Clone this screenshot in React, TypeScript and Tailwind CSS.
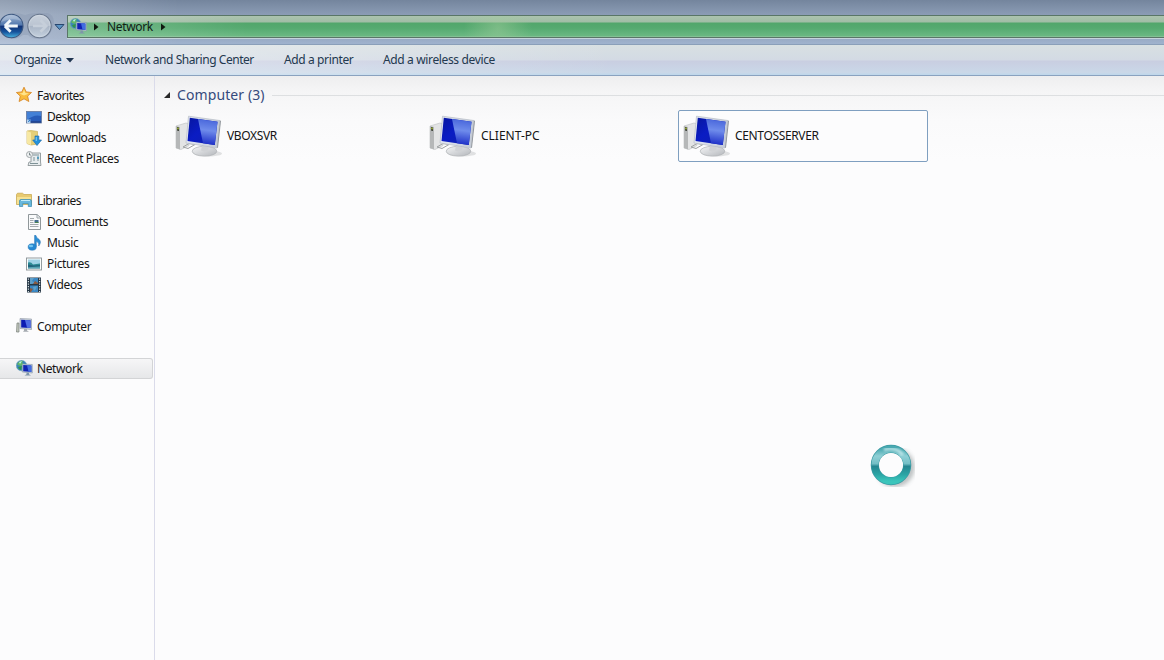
import React from "react";

type IconProps = { className?: string };

function Monitor({ className }: IconProps) {
  return (
    <svg className={className} viewBox="0 0 48 42" fill="none">
      <defs>
        <linearGradient id="screen" x1="0" y1="0" x2="1" y2="1">
          <stop offset="0" stopColor="#0716a0" />
          <stop offset="0.45" stopColor="#0a1cc4" />
          <stop offset="1" stopColor="#1021a8" />
        </linearGradient>
        <linearGradient id="shine" x1="0.2" y1="0" x2="0.1" y2="1">
          <stop offset="0" stopColor="#4a68dc" />
          <stop offset="0.4" stopColor="#6f8ceb" />
          <stop offset="1" stopColor="#1526c4" />
        </linearGradient>
        <linearGradient id="metal" x1="0" y1="0" x2="1" y2="1">
          <stop offset="0" stopColor="#f4f5f6" />
          <stop offset="1" stopColor="#b4b7bc" />
        </linearGradient>
        <linearGradient id="frame" x1="0" y1="0" x2="1" y2="0">
          <stop offset="0" stopColor="#e4e8f2" />
          <stop offset="1" stopColor="#c3cad6" />
        </linearGradient>
      </defs>
      <ellipse cx="33" cy="38" rx="14" ry="3" fill="#c4c5c7" opacity="0.5" />
      <path d="M1 10.500L11 7.500L14 8.500V30L6 34L1 32.500Z" fill="#e3e4e5" stroke="#c3c5c7" strokeWidth="0.700" />
      <path d="M1 10.500L5 11.500V34L1 32.500Z" fill="#b5b7b8" />
      <path d="M2 11.500L4 12V15.500L2 15Z" fill="#33392f" />
      <circle cx="3" cy="13" r="0.900" fill="#a4b93a" />
      <path d="M8 31.500L14 28L20 29L13 33Z" stroke="#9da0a2" strokeWidth="1" />
      <path d="M27 29L35 30V35H27Z" fill="#b5b8bb" />
      <ellipse cx="29.500" cy="35.700" rx="12.300" ry="4.900" fill="url(#metal)" stroke="#b0b3b6" strokeWidth="0.700" />
      <path d="M27 30L34 31L33 35Q30 37 26 35Z" fill="#d0d2d5" />
      <path d="M13.500 0.700L45 5L42 32.500L11 27.500Z" fill="url(#frame)" stroke="#b7bdc6" strokeWidth="0.700" />
      <path d="M14.800 2.200L42.500 6.300L39.800 29.500L12.500 25.500Z" fill="url(#screen)" />
      <path d="M23 3.500L42.500 6.300L39.800 29.500L28 27.700Z" fill="url(#shine)" />
      <path d="M45 5L46 5.500L43 32L42 32.500Z" fill="#92979d" />
    </svg>
  );
}

function NetworkIcon({ className }: IconProps) {
  return (
    <svg className={className} viewBox="0 0 17 16" fill="none">
      <circle cx="5.500" cy="5.500" r="5.300" fill="#3b87b8" stroke="#7ba9bc" strokeWidth="0.500" />
      <path d="M1 4Q4 0 7 1L6 3L8 4L5 6L2 5Z" fill="#62b966" />
      <path d="M2 7L6 6L5 10L3 9Z" fill="#309647" />
      <path d="M3 2L6 1L4 4Z" fill="#bbedf0" />
      <path d="M6.300 4L16.300 4.500V13L6.300 12Z" fill="#cad6df" stroke="#8293a3" strokeWidth="0.600" />
      <path d="M7.200 5L15.400 5.400V12L7.200 11.200Z" fill="#1124b3" />
      <path d="M11 5.200L15.400 5.400V12L12.500 11.700Z" fill="#416de0" />
      <path d="M10.500 12.700H13V14.300L15 15.500H8.500L10.500 14.300Z" fill="#7e95aa" />
    </svg>
  );
}

function ComputerIcon({ className }: IconProps) {
  return (
    <svg className={className} viewBox="0 0 17 16" fill="none">
      <path d="M1 5H3V14H0.500Z" fill="#c2c7bd" stroke="#777e78" strokeWidth="0.700" />
      <path d="M4 0.500L15.500 1V11.500L4 10.500Z" fill="#c8d0da" stroke="#8b96a3" strokeWidth="0.600" />
      <path d="M5.200 1.700L14.500 2.200V10L5.200 9.500Z" fill="#0b1bb2" />
      <path d="M9 1.900L14.500 2.200V10L11 9.700Z" fill="#506fe4" />
      <path d="M8 11H11V12.500L13 13.800H7L8 12.500Z" fill="#a5abb1" />
    </svg>
  );
}

function StarIcon({ className }: IconProps) {
  return (
    <svg className={className} viewBox="0 0 17 16">
      <path d="M8 0.200L10.200 4.900L15.500 5.500L11.600 9.100L12.800 14.500L8 11.800L3.100 14.500L4.300 9.100L0.400 5.500L5.800 4.900Z" fill="#f9bb3c" stroke="#d88a2b" strokeWidth="0.900" />
      <path d="M8 2.500L9.400 5.900L13 6.400L8 8.500L3.300 6.400L6.700 5.900Z" fill="#ffe48c" />
    </svg>
  );
}

function DesktopIcon({ className }: IconProps) {
  return (
    <svg className={className} viewBox="0 0 16 16">
      <rect x="0.500" y="2.500" width="15" height="11.500" fill="#285cb9" stroke="#667b9f" strokeWidth="0.800" />
      <path d="M1 3H15V7Q8 5 1 11Z" fill="#4380d6" />
      <path d="M1 12.500H15V13.500H1Z" fill="#1a3375" />
      <path d="M1 10.500H4.500V14H1Z" fill="#b9d4ee" />
      <path d="M2 13L4 11M2.500 11H4V12.500" stroke="#2375c5" strokeWidth="0.800" fill="none" />
    </svg>
  );
}

function DownloadsIcon({ className }: IconProps) {
  return (
    <svg className={className} viewBox="0 0 16 16">
      <path d="M1 1L5 0.500L11.500 1.500V14L5 15L1 13.500Z" fill="#e5cf78" stroke="#cbb35a" strokeWidth="0.700" />
      <path d="M1 1L5 2.500V15L1 13.500Z" fill="#f7e8a4" />
      <path d="M9 6H12.800V10H15.500L11 15.500L6.700 10H9Z" fill="#2492dc" stroke="#2470aa" strokeWidth="0.700" />
      <path d="M9.700 7H10.800V11H9.700Z" fill="#83cbf4" />
    </svg>
  );
}

function RecentIcon({ className }: IconProps) {
  return (
    <svg className={className} viewBox="0 0 16 16" fill="none">
      <path d="M5 2H14.500V11L15 14.500H2L3 11H5Z" fill="#e7ecee" stroke="#8d9699" strokeWidth="0.900" />
      <path d="M7 4H13M7 7H9M11 7H13M7 9H9M11 9H13M4 12.500H12" stroke="#7f9297" />
      <path d="M11 5.500H13V8H11Z" fill="#5c9dbb" />
      <circle cx="3.500" cy="3.500" r="3" fill="#edf0f1" stroke="#a0a6a9" />
      <path d="M3.500 1.700V4H5" stroke="#617075" strokeWidth="0.800" />
    </svg>
  );
}

function LibrariesIcon({ className }: IconProps) {
  return (
    <svg className={className} viewBox="0 0 17 16">
      <path d="M0.500 2.500L1.500 1.200H6.500L8 2.500H15.500V12.500H0.500Z" fill="#e8ca70" stroke="#c4a448" strokeWidth="0.700" />
      <path d="M1 5H15V12H1Z" fill="#f5e193" />
      <path d="M3.500 9Q3.500 7.500 5 7.500H14Q15.500 7.500 15.500 9V14.500H12.300V11.500H6.700V14.500H3.500Z" fill="#67b7dc" stroke="#388bb5" strokeWidth="0.700" />
      <path d="M5 8.500H14" stroke="#c2ebf8" />
    </svg>
  );
}

function DocumentsIcon({ className }: IconProps) {
  return (
    <svg className={className} viewBox="0 0 16 16" fill="none">
      <path d="M2.500 0.500H11L14.500 3.500V15.500H2.500Z" fill="#f9fafb" stroke="#838b8f" strokeWidth="0.900" />
      <path d="M11 0.500V4H14.500" stroke="#9ba4a8" />
      <path d="M4 4.500H8M4 6.500H7.500M4 8.500H7.500M4 10.500H12.500M4 12.500H12.500" stroke="#9ba1a5" strokeWidth="0.900" />
      <path d="M8.500 6H12.500V9H8.500Z" fill="#436d91" />
      <path d="M9 8H12.500V9H9Z" fill="#49834a" />
    </svg>
  );
}

function MusicIcon({ className }: IconProps) {
  return (
    <svg className={className} viewBox="0 0 16 16">
      <path d="M8.600 0.300H9.800Q10.200 2.800 13 4.300Q16 7 12.700 11Q13.700 7.800 10.300 6.300V11.500H8.600Z" fill="#2b8fd6" stroke="#236caf" strokeWidth="0.500" />
      <ellipse cx="6.200" cy="12" rx="4.100" ry="3.300" fill="#2588d2" stroke="#337eb7" strokeWidth="0.500" />
      <ellipse cx="5" cy="11" rx="2.200" ry="1.300" fill="#72c6ef" />
    </svg>
  );
}

function PicturesIcon({ className }: IconProps) {
  return (
    <svg className={className} viewBox="0 0 16 16">
      <rect x="0.500" y="2" width="15" height="12" fill="#fafcfc" stroke="#899296" strokeWidth="0.900" />
      <path d="M2 3.500H14V12.300H2Z" fill="#9fd2e6" />
      <path d="M2 6.500Q5 5.500 7 8.500L14 7.500V12.300H2Z" fill="#2c8a94" />
      <path d="M2 8.500L8 9.500L14 9V12.300H2Z" fill="#21647c" />
      <path d="M2 11.300L14 10.500V12.300H2Z" fill="#57a5b4" />
    </svg>
  );
}

function VideosIcon({ className }: IconProps) {
  return (
    <svg className={className} viewBox="0 0 16 16">
      <path d="M1 0.500H15V15.500H1Z" fill="#273847" />
      <path d="M4 1H12V7H4ZM4 8.500H12V15H4Z" fill="#3987c3" />
      <path d="M4 1H8L6 4L9 6L5 7H4ZM7 10L11 9L10 12L8 14Z" fill="#5f9fc9" />
      <path d="M9 4L12 6V7H7ZM4 11L7 12L5 15H4Z" fill="#8b5a40" />
      <path d="M2.400 1.500V15M13.600 1.500V15" stroke="#d4dde2" strokeWidth="1.200" strokeDasharray="1.2 1.3" />
    </svg>
  );
}

function NavButtons() {
  return (
    <svg className="h-[30px] w-[67px] shrink-0" viewBox="0 0 67 30" fill="none">
      <defs>
        <linearGradient id="back" x1="0" y1="0" x2="0" y2="1">
          <stop offset="0" stopColor="#a3b8d4" />
          <stop offset="0.450" stopColor="#5278ae" />
          <stop offset="0.520" stopColor="#123478" />
          <stop offset="0.750" stopColor="#16539c" />
          <stop offset="1" stopColor="#49b4e0" />
        </linearGradient>
        <linearGradient id="forward" x1="0" y1="0" x2="0" y2="1">
          <stop offset="0" stopColor="#c9d1dc" />
          <stop offset="0.480" stopColor="#bac4d1" />
          <stop offset="0.520" stopColor="#a9b5c6" />
          <stop offset="1" stopColor="#c6d2df" />
        </linearGradient>
      </defs>
      <path d="M12 2Q20 2 25 4Q30 2 40 2H47Q54 3 54 12Q51 28 39 28Q32 28 28 24H23Q18 28 11 28Z" fill="#8797ae" opacity="0.400" />
      <circle cx="11.300" cy="15" r="11.700" fill="url(#back)" stroke="#3d5880" strokeWidth="1.100" />
      <path d="M1 11Q4 4 11 4Q18 4 22 10Q12 6 1 11Z" fill="#d0dae6" opacity="0.350" />
      <path d="M4.800 15L10.600 9.300M4.800 15L10.600 20.700M5 15H17.800" stroke="#f2f7fa" strokeWidth="2.900" />
      <circle cx="39.500" cy="15" r="11.700" fill="url(#forward)" stroke="#69778d" strokeWidth="1.100" />
      <circle cx="39.500" cy="15" r="10.600" stroke="#dae1e9" strokeWidth="0.700" opacity="0.600" />
      <path d="M33 15H45M40.500 9.300L46.200 15L40.500 20.700" stroke="#c6cfda" strokeWidth="2.700" />
      <path d="M55 13.500H64L59.500 18.500Z" fill="#5b93c4" stroke="#28466e" strokeWidth="1" />
    </svg>
  );
}

function NavItem({ icon: Icon, label, text, child = false, selected = false }: {
  icon: React.ComponentType<IconProps>;
  label: string;
  text: string;
  child?: boolean;
  selected?: boolean;
}) {
  const indent = child ? "gap-[5px] pl-[26px]" : "gap-[4px] pl-4";
  const state = selected
    ? "mr-px rounded-r-[3px] border border-l-0 border-[#d3d4d6] bg-linear-to-b from-[#f6f6f7] to-[#e6e7e9]"
    : "border border-transparent border-l-0";
  return (
    <div className={`flex h-[21px] items-center ${indent} ${state}`}>
      <Icon className={child ? "h-4 w-4 shrink-0" : "h-4 w-[17px] shrink-0 -translate-y-px"} />
      <span className={`whitespace-nowrap ${text}`}>{label}</span>
    </div>
  );
}

function Machine({ name, text, focused = false }: { name: string; text: string; focused?: boolean }) {
  return (
    <div className={`flex h-[52px] items-start gap-1 rounded-[2px] border pl-1 pt-1 ${focused ? "w-[250px] border-[#7f9fc0] bg-[#fcfcfd]" : "w-[254px] border-transparent"}`}>
      <Monitor className="h-[43px] w-[48px] shrink-0" />
      <span className={`mt-3 whitespace-nowrap leading-[18px] ${text}`}>{name}</span>
    </div>
  );
}

export default function App() {
  return (
    <main className="flex h-[660px] w-[1164px] flex-col overflow-hidden bg-[#fcfcfd] font-['Noto_Sans',sans-serif] text-[12px] text-[#151515]">
      <header className="flex h-[45px] shrink-0 border-b border-[#8a9fb9] bg-[linear-gradient(90deg,#ffffff38,transparent_180px),linear-gradient(#74859d_0px,#8a9bb4_14px,#98a9c3_38px,#9fb3ce_44px)] pt-[11px]">
        <NavButtons />
        <div className="mt-1 flex h-[23px] flex-1 items-center border-y border-l border-[#597667] bg-[radial-gradient(ellipse_34px_40px_at_430px_12px,#a1ce9d80,transparent),linear-gradient(90deg,#ffffff38,transparent_180px),linear-gradient(#abc3ae_0px,#a1bda6_6px,#52a66b_7px,#55aa70_12px,#6ab882_20px,#99c9a5_21px)] shadow-[0_1px_0_#c4d3dc]">
          <NetworkIcon className="ml-[2px] h-[16px] w-[17px] -translate-y-px" />
          <svg className="ml-[7px] h-2 w-[5px]" viewBox="0 0 5 8"><path d="M0 0.500L4.500 4L0 7.500Z" fill="#101810" /></svg>
          <span className="ml-[8px] w-[46px] tracking-[-0.35px] text-[#102116]">Network</span>
          <svg className="ml-[8px] h-2 w-[5px]" viewBox="0 0 5 8"><path d="M0 0.500L4.500 4L0 7.500Z" fill="#101810" /></svg>
        </div>
      </header>

      <nav className="flex h-[31px] shrink-0 items-center whitespace-nowrap border-b border-[#8aa2bf] bg-[linear-gradient(90deg,#ffffff70,transparent_620px),linear-gradient(#d8e0e2_0px,#d3dae4_15px,#c9cee1_16px,#cad8e8_28px,#c0d7ea_29px)] pl-[14px] text-[#23384f]">
        <div className="flex w-[91px] items-center gap-[4px]">
          <span className="w-[48px] tracking-[-0.5px]">Organize</span>
          <svg className="h-[5px] w-[8px]" viewBox="0 0 8 5"><path d="M0 0H8L4 4.500Z" fill="#1e344f" /></svg>
        </div>
        <span className="w-[179px] tracking-[-0.45px]">Network and Sharing Center</span>
        <span className="w-[99px] tracking-[-0.38px]">Add a printer</span>
        <span className="tracking-[-0.36px]">Add a wireless device</span>
      </nav>

      <div className="flex min-h-0 flex-1 bg-[linear-gradient(#eeeeef_0px,#f5f5f6_15px,#fafafb_45px,#fcfcfd_85px)]">
        <aside className="flex w-[155px] shrink-0 flex-col gap-[21px] border-r border-[#dadbea] pt-[9px]">
          <section>
            <NavItem icon={StarIcon} label="Favorites" text="tracking-[-0.45px]" />
            <NavItem icon={DesktopIcon} label="Desktop" text="tracking-[-0.52px]" child />
            <NavItem icon={DownloadsIcon} label="Downloads" text="tracking-[-0.42px]" child />
            <NavItem icon={RecentIcon} label="Recent Places" text="tracking-[-0.4px]" child />
          </section>
          <section>
            <NavItem icon={LibrariesIcon} label="Libraries" text="tracking-[-0.52px]" />
            <NavItem icon={DocumentsIcon} label="Documents" text="tracking-[-0.41px]" child />
            <NavItem icon={MusicIcon} label="Music" text="tracking-[-0.3px]" child />
            <NavItem icon={PicturesIcon} label="Pictures" text="tracking-[-0.35px]" child />
            <NavItem icon={VideosIcon} label="Videos" text="tracking-[-0.38px]" child />
          </section>
          <NavItem icon={ComputerIcon} label="Computer" text="tracking-[-0.33px]" />
          <NavItem icon={NetworkIcon} label="Network" text="tracking-[-0.4px]" selected />
        </aside>

        <section className="relative min-w-0 flex-1 pt-[9px]">
          <h1 className="flex h-[20px] items-center pl-[9px] text-[14px] text-[#354a7c]">
            <svg className="mr-[7px] h-[6px] w-[6px]" viewBox="0 0 6 6"><path d="M6 0V6H0Z" fill="#292929" /></svg>
            <span className="w-[89px] -translate-y-px whitespace-nowrap tracking-[0.1px]">Computer (3)</span>
            <span className="ml-[6px] h-px flex-1 bg-[#dddfe1]" />
          </h1>
          <div className="mt-[5px] flex pl-[15px]">
            <Machine name="VBOXSVR" text="tracking-[-0.35px]" />
            <Machine name="CLIENT-PC" text="tracking-[0px]" />
            <Machine name="CENTOSSERVER" text="tracking-[-0.35px]" focused />
          </div>
          <svg className="absolute left-[712px] top-[365px] h-[52px] w-[54px]" viewBox="0 0 54 52" fill="none">
            <defs>
              <linearGradient id="busy" x1="0.500" y1="0" x2="0.500" y2="1">
                <stop offset="0" stopColor="#4aa9b1" />
                <stop offset="0.220" stopColor="#8fd0d6" />
                <stop offset="0.460" stopColor="#74bfc6" />
                <stop offset="0.540" stopColor="#258590" />
                <stop offset="0.800" stopColor="#2ba5a5" />
                <stop offset="1" stopColor="#3bc5bb" />
              </linearGradient>
              <filter id="soft"><feGaussianBlur stdDeviation="2" /></filter>
              <filter id="sheen"><feGaussianBlur stdDeviation="0.800" /></filter>
            </defs>
            <circle cx="28" cy="26.500" r="16" stroke="#5b6668" strokeWidth="7" opacity="0.400" filter="url(#soft)" />
            <circle cx="24" cy="24" r="16" stroke="#3a9aa3" strokeWidth="8.500" />
            <circle cx="24" cy="24" r="16" stroke="url(#busy)" strokeWidth="7" />
            <path d="M17 9Q24 6 32 10L36 14" stroke="#d4f0f3" strokeWidth="3.500" opacity="0.700" filter="url(#sheen)" />
            <circle cx="24" cy="24" r="12" fill="#fcfcfd" />
          </svg>
        </section>
      </div>
    </main>
  );
}
